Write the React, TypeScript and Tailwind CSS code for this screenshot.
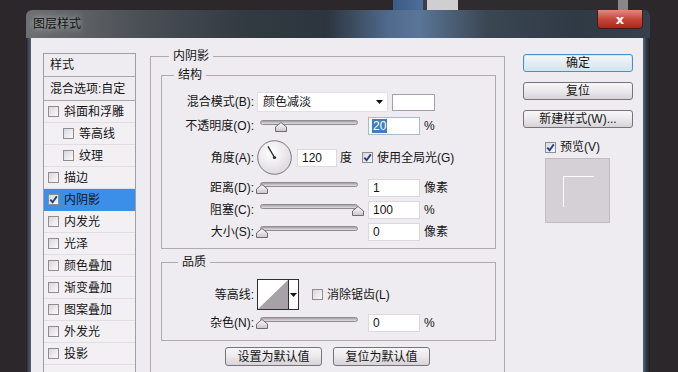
import React from 'react';

const font = "font-['Liberation_Sans','Noto_Sans_CJK_SC',sans-serif]";

const Check = ({ checked }: { checked?: boolean }) => (
  <span className="w-[11px] h-[11px] shrink-0 border border-[#8e8e90] bg-gradient-to-br from-[#d8d6da] to-[#fbfbfb] flex items-center justify-center">
    {checked && (
      <svg width="9" height="9" viewBox="0 0 9 9">
        <path d="M1.3 4.6 L3.6 7.2 L7.8 1.4" stroke="#23408c" strokeWidth="1.9" fill="none" />
      </svg>
    )}
  </span>
);

const Arrow = () => (
  <svg width="7" height="4" viewBox="0 0 7 4">
    <path d="M0 0 H7 L3.5 4 Z" fill="#111" />
  </svg>
);

const Slider = ({ value }: { value: number }) => (
  <div className="relative w-[104px] h-[20px] shrink-0">
    <div className="absolute left-[3px] w-[98px] top-[4px] h-[5px] rounded-full border border-[#8f8b91] bg-gradient-to-b from-[#a4a0a6] to-[#e2dee4]" />
    <svg
      className="absolute top-[6px]"
      style={{ left: 5 + value * 0.96 - 6 }}
      width="12"
      height="10"
      viewBox="0 0 12 10"
    >
      <defs>
        <linearGradient id="thumb" x1="0" y1="0" x2="0" y2="1">
          <stop offset="0" stopColor="#ffffff" />
          <stop offset="1" stopColor="#c9c5cb" />
        </linearGradient>
      </defs>
      <path d="M6 0.5 L11.5 5 V9.5 H0.5 V5 Z" fill="url(#thumb)" stroke="#6f6b71" strokeWidth="1" />
    </svg>
  </div>
);

const NumInput = ({ value, w = 'w-[52px]', selected }: { value: string; w?: string; selected?: boolean }) => (
  <div
    className={`${w} h-[18px] shrink-0 bg-white border ${selected ? 'border-[#a9bccf]' : 'border-[#dcd9de]'} flex items-center pl-[3px] text-[12px] leading-none`}
  >
    {selected ? <span className="bg-[#3d7fc2] text-white px-[1px] py-[1px]">{value}</span> : <span className="pl-[1px]">{value}</span>}
  </div>
);

const Label = ({ children }: { children: React.ReactNode }) => (
  <span className="w-[93px] shrink-0 text-right pr-[1px] whitespace-nowrap">{children}</span>
);

const SliderRow = ({ label, value, input, unit, mt, selected }: { label: string; value: number; input: string; unit: string; mt: string; selected?: boolean }) => (
  <div className={`flex items-center h-[20px] ${mt}`}>
    <Label>{label}</Label>
    <span className="ml-[2px]">
      <Slider value={value} />
    </span>
    <span className="ml-[7px]">
      <NumInput value={input} selected={selected} />
    </span>
    <span className="ml-[4px]">{unit}</span>
  </div>
);

const Btn = ({ children, primary, w = 'w-full', h = 'h-[18px]' }: { children: React.ReactNode; primary?: boolean; w?: string; h?: string }) => (
  <div
    className={`${w} ${h} flex items-center justify-center rounded-[3px] border text-[12px] leading-none whitespace-nowrap ${
      primary
        ? 'border-[#4a8fc4] bg-gradient-to-b from-[#f3f8fb] to-[#d5e2ec] shadow-[inset_0_0_0_1px_#cfe9f8]'
        : 'border-[#777379] bg-gradient-to-b from-[#f7f6f8] via-[#ebe9ec] to-[#d6d3d8]'
    }`}
  >
    {children}
  </div>
);

const items: { name: string; indent?: boolean; checked?: boolean; selected?: boolean }[] = [
  { name: '斜面和浮雕' },
  { name: '等高线', indent: true },
  { name: '纹理', indent: true },
  { name: '描边' },
  { name: '内阴影', checked: true, selected: true },
  { name: '内发光' },
  { name: '光泽' },
  { name: '颜色叠加' },
  { name: '渐变叠加' },
  { name: '图案叠加' },
  { name: '外发光' },
  { name: '投影' },
];

export default function App() {
  return (
    <div className={`w-[678px] h-[372px] overflow-hidden bg-[#2b272a] flex flex-col text-[#141414] text-[12px] ${font}`}>
      {/* windows behind */}
      <div className="h-[10px] flex shrink-0">
        <div className="w-[393px]" />
        <div className="w-[30px] bg-gradient-to-r from-[#3b5a84] to-[#4d6f9c]" />
        <div className="w-[4px] bg-[#3a3f48]" />
        <div className="w-[31px] bg-[#cfcfd2]" />
        <div className="flex-1 bg-[#2f2c30]" />
        <div className="w-[10px] bg-[#8a878b]" />
        <div className="w-[50px]" />
      </div>

      <div className="ml-[26px] w-[624px] flex-1 flex flex-col rounded-tl-[6px] rounded-tr-[6px] overflow-hidden">
        {/* title bar */}
        <div className="h-[28px] shrink-0 flex items-start bg-[linear-gradient(90deg,#6e7073_0%,#4b5056_18%,#323a42_35%,#2c343d_48%,#4f6a8c_58%,#5a7597_63%,#3a4652_74%,#2f3a45_88%,#34404b_100%)]">
          <span className="ml-[7px] mt-[7px] text-[12px] leading-[14px] text-[#111] [text-shadow:0_0_6px_#d8dadc]">图层样式</span>
          <div className="ml-auto mr-[7px] w-[46px] h-[19px] rounded-b-[4px] border border-t-0 border-[#4a1a14] bg-gradient-to-b from-[#e08a7c] via-[#c7473a] to-[#a8291c] flex items-center justify-center">
            <span className="text-white font-bold text-[13px] leading-none font-['DejaVu_Sans',sans-serif]">x</span>
          </div>
        </div>

        <div className="flex flex-1">
          <div className="w-[5px] shrink-0 bg-gradient-to-r from-[#1f2429] via-[#3d4751] to-[#56606b]" />

          {/* client */}
          <div className="w-[612px] shrink-0 bg-[#efecf1] flex items-start">
            {/* style list */}
            <div className="ml-[12px] mt-[15px] w-[93px] h-[330px] shrink-0 border border-[#a29fa4] bg-[#f3f0f4] flex flex-col">
              <div className="h-[23px] border-b border-[#a9a6ab] bg-[#efecf1] flex items-center pl-[6px]">样式</div>
              <div className="h-[24px] border-b border-[#a9a6ab] bg-[#efecf1] flex items-center pl-[6px] whitespace-nowrap overflow-hidden">混合选项:自定</div>
              {items.map((it) => (
                <div
                  key={it.name}
                  className={`h-[22px] shrink-0 border-b flex items-center ${it.indent ? 'pl-[19px]' : 'pl-[4px]'} ${
                    it.selected ? 'bg-[#3c8fe8] border-[#3c8fe8]' : 'border-[#e1dde2]'
                  }`}
                >
                  <Check checked={it.checked} />
                  <span className="ml-[5px]">{it.name}</span>
                </div>
              ))}
            </div>

            {/* main group */}
            <fieldset className="ml-[14px] mt-[10px] w-[355px] h-[340px] shrink-0 border border-[#aeaab0] flex flex-col">
              <legend className="ml-[18px] px-[4px] leading-[16px]">内阴影</legend>

              <fieldset className="ml-[10px] mt-[3px] w-[335px] border border-[#aeaab0] pb-[6px]">
                <legend className="ml-[12px] px-[4px] leading-[16px]">结构</legend>

                <div className="flex items-center h-[20px] mt-[9px]">
                  <Label>混合模式(B):</Label>
                  <div className="ml-[2px] w-[131px] h-[20px] bg-white border border-[#e3e0e5] flex items-center pl-[5px] pr-[4px]">
                    <span>颜色减淡</span>
                    <span className="ml-auto">
                      <Arrow />
                    </span>
                  </div>
                  <div className="ml-[4px] w-[43px] h-[17px] bg-white border border-[#a4a0a6]" />
                </div>

                <SliderRow label="不透明度(O):" value={20} input="20" unit="%" mt="mt-[4px]" selected />

                <div className="flex items-center h-[35px] mt-[4px]">
                  <Label>角度(A):</Label>
                  <svg className="ml-[2px] shrink-0" width="35" height="35" viewBox="0 0 35 35">
                    <defs>
                      <radialGradient id="dial" cx="0.4" cy="0.35" r="0.7">
                        <stop offset="0" stopColor="#ffffff" />
                        <stop offset="1" stopColor="#dcd8de" />
                      </radialGradient>
                    </defs>
                    <circle cx="17.5" cy="17.5" r="16.8" fill="url(#dial)" stroke="#7a767c" strokeWidth="1" />
                    <line x1="17.5" y1="17.5" x2="11" y2="6.3" stroke="#2a2a2a" strokeWidth="1.4" />
                    <circle cx="17.5" cy="17.5" r="1.6" fill="#2a2a2a" />
                  </svg>
                  <span className="ml-[5px]">
                    <NumInput value="120" w="w-[40px]" />
                  </span>
                  <span className="ml-[3px]">度</span>
                  <span className="ml-[10px]">
                    <Check checked />
                  </span>
                  <span className="ml-[4px]">使用全局光(G)</span>
                </div>

                <SliderRow label="距离(D):" value={0} input="1" unit="像素" mt="mt-[3px]" />
                <SliderRow label="阻塞(C):" value={100} input="100" unit="%" mt="mt-[2px]" />
                <SliderRow label="大小(S):" value={0} input="0" unit="像素" mt="mt-[2px]" />
              </fieldset>

              <fieldset className="ml-[10px] mt-[5px] w-[335px] border border-[#aeaab0] pb-[7px]">
                <legend className="ml-[16px] px-[4px] leading-[16px]">品质</legend>

                <div className="flex items-center h-[31px] mt-[9px]">
                  <Label>等高线:</Label>
                  <div className="ml-[2px] w-[42px] h-[31px] shrink-0 border border-[#2e2e30] bg-white flex">
                    <svg width="30" height="29" viewBox="0 0 30 29">
                      <rect width="30" height="29" fill="#ffffff" />
                      <polygon points="0,29 30,0 30,29" fill="#a6a2a8" />
                    </svg>
                    <div className="w-[10px] border-l border-[#2e2e30] flex items-center justify-center">
                      <Arrow />
                    </div>
                  </div>
                  <span className="ml-[13px]">
                    <Check />
                  </span>
                  <span className="ml-[4px]">消除锯齿(L)</span>
                </div>

                <SliderRow label="杂色(N):" value={0} input="0" unit="%" mt="mt-[3px]" />
              </fieldset>

              <div className="mt-[6px] flex justify-center gap-[11px]">
                <Btn w="w-[97px]" h="h-[19px]">设置为默认值</Btn>
                <Btn w="w-[97px]" h="h-[19px]">复位为默认值</Btn>
              </div>
            </fieldset>

            {/* right column */}
            <div className="ml-[18px] mt-[16px] w-[110px] shrink-0 flex flex-col">
              <Btn primary>确定</Btn>
              <div className="mt-[10px]">
                <Btn>复位</Btn>
              </div>
              <div className="mt-[10px]">
                <Btn>新建样式(W)...</Btn>
              </div>
              <div className="mt-[12px] h-[14px] ml-[22px] flex items-center">
                <Check checked />
                <span className="ml-[4px]">预览(V)</span>
              </div>
              <div className="mt-[4px] ml-[22px] w-[65px] h-[65px] bg-[#d4d0d6] border border-[#c0bcc2] pl-[17px] pt-[17px]">
                <div className="w-[31px] h-[31px] border-t border-l border-white" />
              </div>
            </div>
          </div>

          <div className="w-[7px] shrink-0 bg-gradient-to-r from-[#5c6671] via-[#2f3943] to-[#1b2026]" />
        </div>
      </div>
    </div>
  );
}
